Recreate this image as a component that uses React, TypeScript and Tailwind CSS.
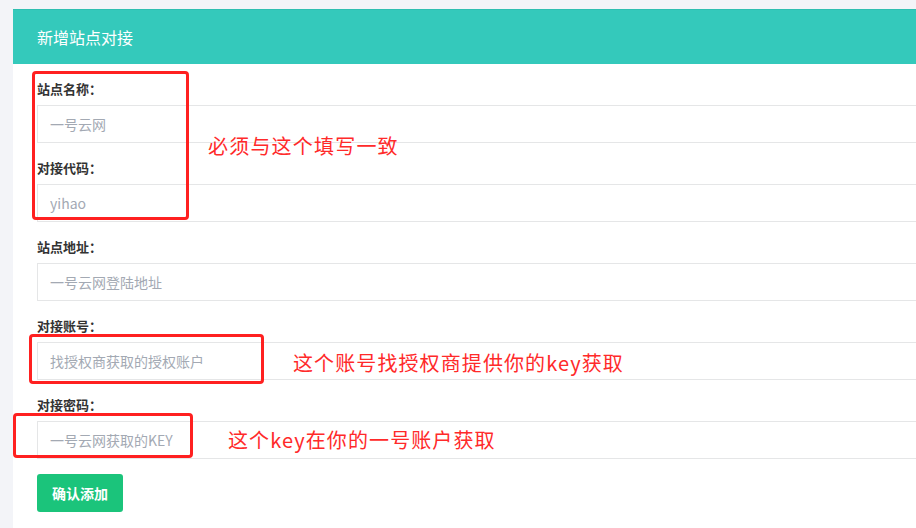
const fields = [
  { label: "站点名称：", placeholder: "一号云网" },
  { label: "对接代码：", placeholder: "yihao" },
  { label: "站点地址：", placeholder: "一号云网登陆地址" },
  { label: "对接账号：", placeholder: "找授权商获取的授权账户" },
  { label: "对接密码：", placeholder: "一号云网获取的KEY" },
]

export default function App() {
  return (
    <div
      className="relative h-[528px] w-[916px] overflow-hidden bg-[#f3f4f8] pt-[9px] pl-[13px]"
      style={{ fontFamily: '"Noto Sans CJK SC", "Liberation Sans", sans-serif' }}
    >
      {/* card runs off the right edge of the screenshot */}
      <div className="h-full w-[940px] bg-white">
        <div className="flex h-[55px] items-center border-t border-[#2fbfb1] bg-[#34c9bb] pl-6 text-[16px] text-white">
          新增站点对接
        </div>

        <form className="pt-[15px] pl-6">
          {fields.map((f) => (
            <div key={f.label} className="mb-[15px]">
              <label className="mb-[6px] block h-5 text-[13px] leading-5 font-bold text-[#333]">{f.label}</label>
              <input
                placeholder={f.placeholder}
                className="block h-[38px] w-full border border-[#e5e6e7] px-3 text-[14px] outline-none placeholder:text-[#a3a9b3]"
              />
            </div>
          ))}
          <button
            type="button"
            className="h-[38px] rounded-[3px] bg-[#1bc47b] px-[15px] text-[14px] font-bold text-white"
          >
            确认添加
          </button>
        </form>
      </div>

      {/* annotations */}
      <div className="absolute top-[71px] left-[32px] h-[149px] w-[157px] rounded-[4px] border-[3px] border-[#ff2020]" />
      <div className="absolute top-[334px] left-[29px] h-[50px] w-[235px] rounded-[4px] border-[3px] border-[#ff2020]" />
      <div className="absolute top-[413px] left-[13px] h-[45px] w-[180px] rounded-[4px] border-[3px] border-[#ff2020]" />

      <div className="absolute top-[132px] left-[208px] text-[20px] leading-7 tracking-[1.2px] text-[#ff2a2a]">
        必须与这个填写一致
      </div>
      <div className="absolute top-[349px] left-[293px] text-[20px] leading-7 tracking-[1.1px] text-[#ff2a2a]">
        这个账号找授权商提供你的key获取
      </div>
      <div className="absolute top-[426px] left-[228px] text-[20px] leading-7 tracking-[1.1px] text-[#ff2a2a]">
        这个key在你的一号账户获取
      </div>
    </div>
  )
}
